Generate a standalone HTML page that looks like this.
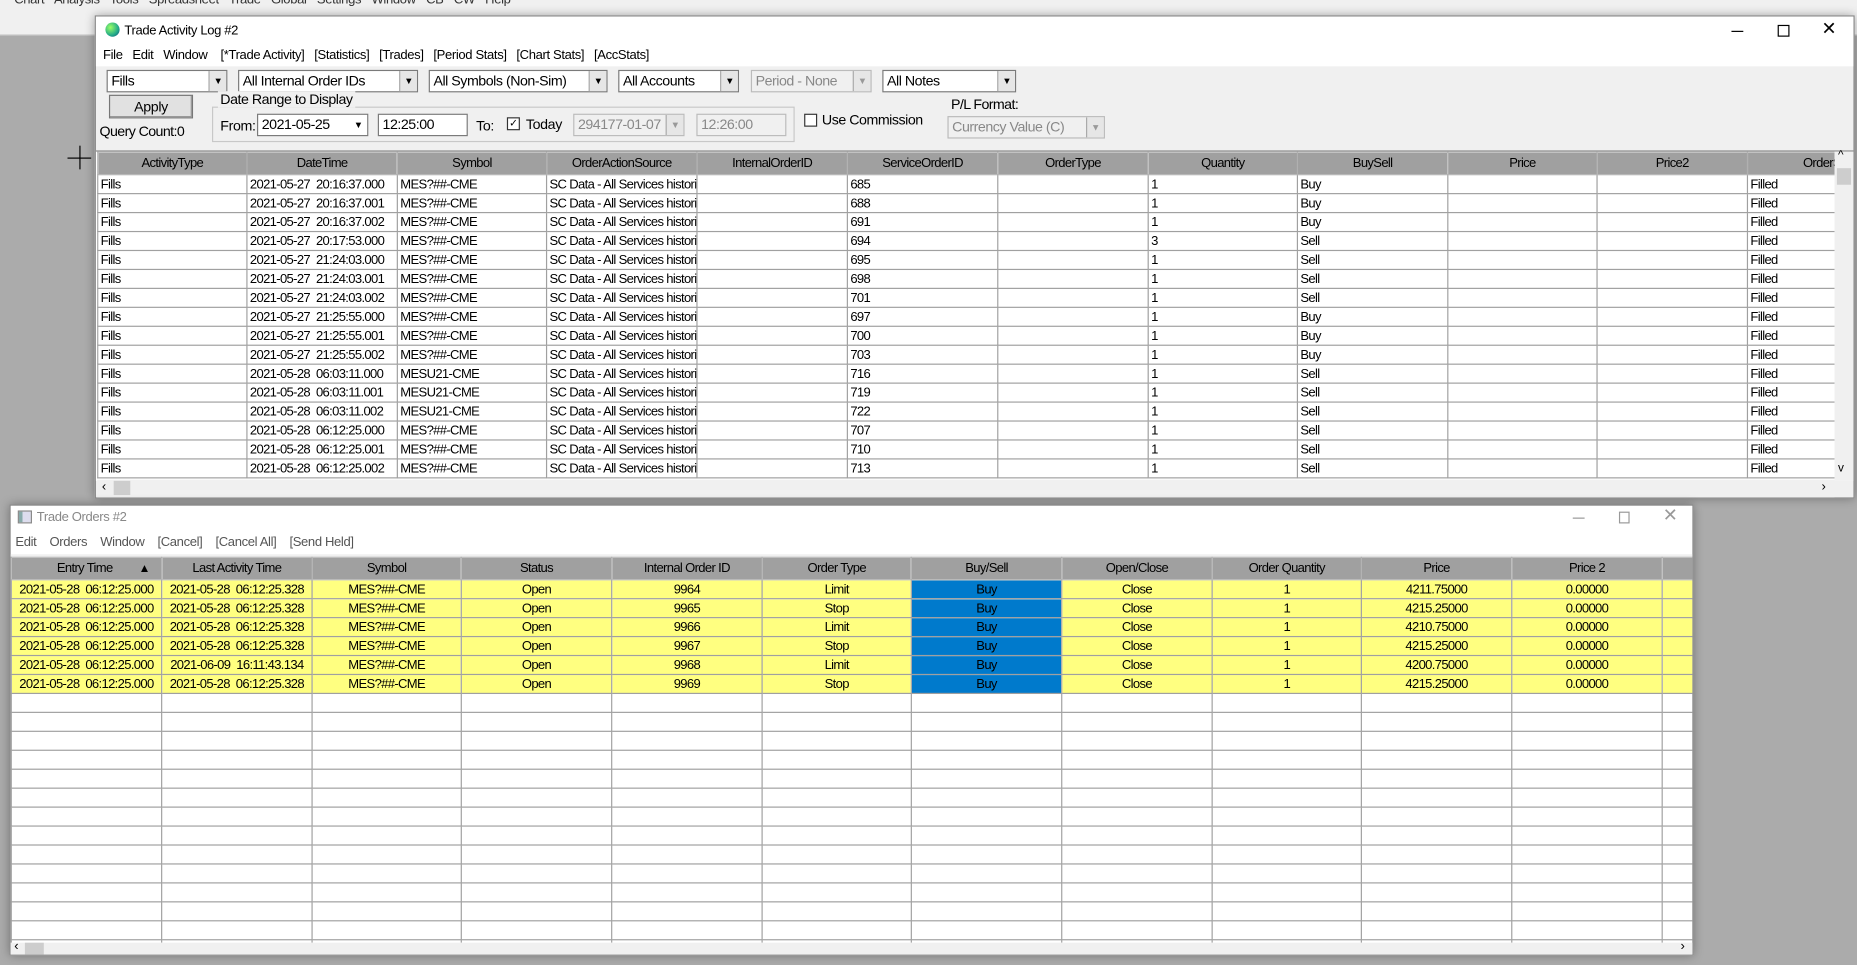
<!DOCTYPE html>
<html><head><meta charset="utf-8"><style>
*{box-sizing:border-box;margin:0;padding:0}
html,body{width:1857px;height:965px;overflow:hidden;background:#ababab}
#s{position:absolute;left:0;top:0;width:1568px;height:815px;transform:scale(1.18431);transform-origin:0 0;font-family:"Liberation Sans",sans-serif;font-size:11px;color:#000;letter-spacing:-0.3px}
.a{position:absolute;white-space:nowrap}
.win{position:absolute;background:#f0f0f0;border:1px solid #888;box-shadow:0 0 8px rgba(0,0,0,.35)}
.combo{position:absolute;height:19px;background:#fff;border:1px solid #7a7a7a;font-size:12px;padding:1px 3px;white-space:nowrap;overflow:hidden;letter-spacing:-0.4px}
.combo .btn{position:absolute;right:0;top:0;width:15px;height:17px;background:#e6e6e6;border-left:1px solid #aaa;font-size:8px;text-align:center;line-height:17px}
.dis{background:#f0f0f0;color:#888;border-color:#bbb}
table{border-collapse:collapse;table-layout:fixed}
td,th{border:1px solid #a0a0a0;height:16px;padding:0 2px;white-space:nowrap;overflow:hidden;font-weight:normal;font-size:11px;line-height:14px;letter-spacing:-0.55px}
th{background:#a0a0a0;border-color:#b0b0b0;text-align:center;height:19px}
#t2 td{text-align:center}
#t2 tr.y td{background:#ffff80}
#t2 tr.y td.b{background:#007acc}
</style></head><body><div id="s">
<div class="a" style="left:0;top:0;width:1568px;height:30px;background:#f0f0f0;border-bottom:1px solid #ccc"></div>
<div class="a" style="left:12px;top:-6px;font-size:11px;color:#333;word-spacing:6px">Chart Analysis Tools Spreadsheet Trade Global&nbsp;Settings Window CB CW Help</div>

<!-- Window 1 -->
<div class="win" style="left:80px;top:13px;width:1486px;height:408px">
 <div class="a" style="left:0;top:0;width:1484px;height:42px;background:#fff"></div>
 <div class="a" style="left:8px;top:5px;width:12px;height:12px;border-radius:50%;background:radial-gradient(circle at 35% 35%,#9f6,#2a8 60%,#147)"></div>
 <div class="a" style="left:24px;top:6px">Trade Activity Log #2</div>
 <div class="a" style="left:1381px;top:12px;width:10px;height:1px;background:#000"></div>
 <div class="a" style="left:1420px;top:7px;width:10px;height:10px;border:1px solid #000"></div>
 <div class="a" style="left:1457px;top:1px;font-size:15px">✕</div>
 <div class="a" style="left:6px;top:27px;word-spacing:0">File&nbsp;&nbsp;&nbsp;Edit&nbsp;&nbsp;&nbsp;Window&nbsp;&nbsp;&nbsp;&nbsp;[*Trade Activity]&nbsp;&nbsp;&nbsp;[Statistics]&nbsp;&nbsp;&nbsp;[Trades]&nbsp;&nbsp;&nbsp;[Period Stats]&nbsp;&nbsp;&nbsp;[Chart Stats]&nbsp;&nbsp;&nbsp;[AccStats]</div>
 <div class="combo" style="left:9px;top:45px;width:102px">Fills<div class="btn">▼</div></div>
 <div class="combo" style="left:120px;top:45px;width:152px">All Internal Order IDs<div class="btn">▼</div></div>
 <div class="combo" style="left:281px;top:45px;width:151px">All Symbols (Non-Sim)<div class="btn">▼</div></div>
 <div class="combo" style="left:441px;top:45px;width:102px">All Accounts<div class="btn">▼</div></div>
 <div class="combo dis" style="left:553px;top:45px;width:102px">Period - None<div class="btn" style="color:#999">▼</div></div>
 <div class="combo" style="left:664px;top:45px;width:113px">All Notes<div class="btn">▼</div></div>
 <div class="a" style="left:11px;top:66px;width:71px;height:20px;background:#e1e1e1;border:1px solid #777;box-shadow:inset -1px -1px #999;text-align:center;font-size:12px;line-height:18px">Apply</div>
 <div class="a" style="left:3px;top:90px;font-size:12px;letter-spacing:-0.5px">Query Count:0</div>
 <div class="a" style="left:98px;top:76px;width:492px;height:30px;border:1px solid #c8c8c8"></div>
 <div class="a" style="left:103px;top:63px;background:#f0f0f0;padding:0 2px;font-size:12px;letter-spacing:-0.4px">Date Range to Display</div>
 <div class="a" style="left:105px;top:85px;font-size:12px">From:</div>
 <div class="combo" style="left:136px;top:82px;width:94px">2021-05-25<div class="btn" style="background:#fff;border:none">▼</div></div>
 <div class="combo" style="left:238px;top:82px;width:76px">12:25:00</div>
 <div class="a" style="left:321px;top:85px;font-size:12px">To:</div>
 <div class="a" style="left:347px;top:85px;width:11px;height:11px;border:1px solid #333;background:#fff;font-size:9px;line-height:9px;text-align:center">✓</div>
 <div class="a" style="left:363px;top:84px;font-size:12px">Today</div>
 <div class="combo dis" style="left:403px;top:82px;width:94px">294177-01-07<div class="btn" style="color:#999">▼</div></div>
 <div class="combo dis" style="left:507px;top:82px;width:76px">12:26:00</div>
 <div class="a" style="left:598px;top:82px;width:11px;height:11px;border:1px solid #333;background:#fff"></div>
 <div class="a" style="left:613px;top:80px;font-size:12px;letter-spacing:-0.4px">Use Commission</div>
 <div class="a" style="left:722px;top:67px;font-size:12px;letter-spacing:-0.5px">P/L Format:</div>
 <div class="combo dis" style="left:719px;top:84px;width:133px">Currency Value (C)<div class="btn" style="color:#999">▼</div></div>
 <div class="a" style="left:0;top:113px;width:1484px;height:279px;background:#fff;border-top:1px solid #888"></div>
 <div class="a" style="left:1px;top:114px;width:1467px;height:278px;overflow:hidden">
 <table style="width:1540px">
 <colgroup><col style="width:126px"><col style="width:127px"><col style="width:126px"><col style="width:127px"><col style="width:127px"><col style="width:127px"><col style="width:127px"><col style="width:126px"><col style="width:127px"><col style="width:126px"><col style="width:127px"><col style="width:147px"></colgroup>
 <tr><th>ActivityType</th><th>DateTime</th><th>Symbol</th><th>OrderActionSource</th><th>InternalOrderID</th><th>ServiceOrderID</th><th>OrderType</th><th>Quantity</th><th>BuySell</th><th>Price</th><th>Price2</th><th>OrderStatus</th></tr>
 <tr><td>Fills</td><td>2021-05-27&nbsp; 20:16:37.000</td><td>MES?##-CME</td><td>SC Data - All Services histori</td><td></td><td>685</td><td></td><td>1</td><td>Buy</td><td></td><td></td><td>Filled</td></tr>
 <tr><td>Fills</td><td>2021-05-27&nbsp; 20:16:37.001</td><td>MES?##-CME</td><td>SC Data - All Services histori</td><td></td><td>688</td><td></td><td>1</td><td>Buy</td><td></td><td></td><td>Filled</td></tr>
 <tr><td>Fills</td><td>2021-05-27&nbsp; 20:16:37.002</td><td>MES?##-CME</td><td>SC Data - All Services histori</td><td></td><td>691</td><td></td><td>1</td><td>Buy</td><td></td><td></td><td>Filled</td></tr>
 <tr><td>Fills</td><td>2021-05-27&nbsp; 20:17:53.000</td><td>MES?##-CME</td><td>SC Data - All Services histori</td><td></td><td>694</td><td></td><td>3</td><td>Sell</td><td></td><td></td><td>Filled</td></tr>
 <tr><td>Fills</td><td>2021-05-27&nbsp; 21:24:03.000</td><td>MES?##-CME</td><td>SC Data - All Services histori</td><td></td><td>695</td><td></td><td>1</td><td>Sell</td><td></td><td></td><td>Filled</td></tr>
 <tr><td>Fills</td><td>2021-05-27&nbsp; 21:24:03.001</td><td>MES?##-CME</td><td>SC Data - All Services histori</td><td></td><td>698</td><td></td><td>1</td><td>Sell</td><td></td><td></td><td>Filled</td></tr>
 <tr><td>Fills</td><td>2021-05-27&nbsp; 21:24:03.002</td><td>MES?##-CME</td><td>SC Data - All Services histori</td><td></td><td>701</td><td></td><td>1</td><td>Sell</td><td></td><td></td><td>Filled</td></tr>
 <tr><td>Fills</td><td>2021-05-27&nbsp; 21:25:55.000</td><td>MES?##-CME</td><td>SC Data - All Services histori</td><td></td><td>697</td><td></td><td>1</td><td>Buy</td><td></td><td></td><td>Filled</td></tr>
 <tr><td>Fills</td><td>2021-05-27&nbsp; 21:25:55.001</td><td>MES?##-CME</td><td>SC Data - All Services histori</td><td></td><td>700</td><td></td><td>1</td><td>Buy</td><td></td><td></td><td>Filled</td></tr>
 <tr><td>Fills</td><td>2021-05-27&nbsp; 21:25:55.002</td><td>MES?##-CME</td><td>SC Data - All Services histori</td><td></td><td>703</td><td></td><td>1</td><td>Buy</td><td></td><td></td><td>Filled</td></tr>
 <tr><td>Fills</td><td>2021-05-28&nbsp; 06:03:11.000</td><td>MESU21-CME</td><td>SC Data - All Services histori</td><td></td><td>716</td><td></td><td>1</td><td>Sell</td><td></td><td></td><td>Filled</td></tr>
 <tr><td>Fills</td><td>2021-05-28&nbsp; 06:03:11.001</td><td>MESU21-CME</td><td>SC Data - All Services histori</td><td></td><td>719</td><td></td><td>1</td><td>Sell</td><td></td><td></td><td>Filled</td></tr>
 <tr><td>Fills</td><td>2021-05-28&nbsp; 06:03:11.002</td><td>MESU21-CME</td><td>SC Data - All Services histori</td><td></td><td>722</td><td></td><td>1</td><td>Sell</td><td></td><td></td><td>Filled</td></tr>
 <tr><td>Fills</td><td>2021-05-28&nbsp; 06:12:25.000</td><td>MES?##-CME</td><td>SC Data - All Services histori</td><td></td><td>707</td><td></td><td>1</td><td>Sell</td><td></td><td></td><td>Filled</td></tr>
 <tr><td>Fills</td><td>2021-05-28&nbsp; 06:12:25.001</td><td>MES?##-CME</td><td>SC Data - All Services histori</td><td></td><td>710</td><td></td><td>1</td><td>Sell</td><td></td><td></td><td>Filled</td></tr>
 <tr><td>Fills</td><td>2021-05-28&nbsp; 06:12:25.002</td><td>MES?##-CME</td><td>SC Data - All Services histori</td><td></td><td>713</td><td></td><td>1</td><td>Sell</td><td></td><td></td><td>Filled</td></tr>
 </table></div>
 <div class="a" style="left:1468px;top:114px;width:16px;height:278px;background:#f0f0f0"><div class="a" style="left:3px;top:-2px;font-size:10px">^</div><div class="a" style="left:2px;top:14px;width:12px;height:14px;background:#cdcdcd"></div><div class="a" style="left:3px;top:262px;font-size:10px">v</div></div>
 <div class="a" style="left:1px;top:391px;width:1467px;height:15px;background:#f0f0f0"><div class="a" style="left:4px;top:0;font-size:11px">‹</div><div class="a" style="left:14px;top:1px;width:14px;height:12px;background:#cdcdcd"></div><div class="a" style="left:1456px;top:0;font-size:11px">›</div></div>
</div>

<!-- Window 2 -->
<div class="win" style="left:8px;top:426px;width:1422px;height:381px;background:#fff">
 <div class="a" style="left:6px;top:4px;width:12px;height:11px;border:1px solid #888;background:linear-gradient(90deg,#8aa 30%,#dde 30%)"></div>
 <div class="a" style="left:22px;top:4px;color:#888">Trade Orders #2</div>
 <div class="a" style="left:1319px;top:10px;width:10px;height:1px;background:#999"></div>
 <div class="a" style="left:1358px;top:5px;width:9px;height:10px;border:1px solid #999"></div>
 <div class="a" style="left:1395px;top:-1px;font-size:15px;color:#999">✕</div>
 <div class="a" style="left:4px;top:25px;color:#555">Edit&nbsp;&nbsp;&nbsp;&nbsp;Orders&nbsp;&nbsp;&nbsp;&nbsp;Window&nbsp;&nbsp;&nbsp;&nbsp;[Cancel]&nbsp;&nbsp;&nbsp;&nbsp;[Cancel All]&nbsp;&nbsp;&nbsp;&nbsp;[Send Held]</div>
 <div class="a" style="left:0;top:41px;width:1420px;height:2px;background:#f0f0f0"></div>
 <div class="a" style="left:-1px;top:43px;width:1421px;height:326px;overflow:hidden;border-left:1px solid #888">
 <table id="t2" style="width:1420px">
 <colgroup><col style="width:127px"><col style="width:127px"><col style="width:126px"><col style="width:127px"><col style="width:127px"><col style="width:126px"><col style="width:127px"><col style="width:127px"><col style="width:126px"><col style="width:127px"><col style="width:127px"><col style="width:26px"></colgroup>
 <tr><th style="text-align:left;padding-left:38px">Entry Time<span style="margin-left:22px;font-size:10px">▲</span></th><th>Last Activity Time</th><th>Symbol</th><th>Status</th><th>Internal Order ID</th><th>Order Type</th><th>Buy/Sell</th><th>Open/Close</th><th>Order Quantity</th><th>Price</th><th>Price 2</th><th></th></tr>
 <tr class="y"><td>2021-05-28&nbsp; 06:12:25.000</td><td>2021-05-28&nbsp; 06:12:25.328</td><td>MES?##-CME</td><td>Open</td><td>9964</td><td>Limit</td><td class="b">Buy</td><td>Close</td><td>1</td><td>4211.75000</td><td>0.00000</td><td></td></tr>
 <tr class="y"><td>2021-05-28&nbsp; 06:12:25.000</td><td>2021-05-28&nbsp; 06:12:25.328</td><td>MES?##-CME</td><td>Open</td><td>9965</td><td>Stop</td><td class="b">Buy</td><td>Close</td><td>1</td><td>4215.25000</td><td>0.00000</td><td></td></tr>
 <tr class="y"><td>2021-05-28&nbsp; 06:12:25.000</td><td>2021-05-28&nbsp; 06:12:25.328</td><td>MES?##-CME</td><td>Open</td><td>9966</td><td>Limit</td><td class="b">Buy</td><td>Close</td><td>1</td><td>4210.75000</td><td>0.00000</td><td></td></tr>
 <tr class="y"><td>2021-05-28&nbsp; 06:12:25.000</td><td>2021-05-28&nbsp; 06:12:25.328</td><td>MES?##-CME</td><td>Open</td><td>9967</td><td>Stop</td><td class="b">Buy</td><td>Close</td><td>1</td><td>4215.25000</td><td>0.00000</td><td></td></tr>
 <tr class="y"><td>2021-05-28&nbsp; 06:12:25.000</td><td>2021-06-09&nbsp; 16:11:43.134</td><td>MES?##-CME</td><td>Open</td><td>9968</td><td>Limit</td><td class="b">Buy</td><td>Close</td><td>1</td><td>4200.75000</td><td>0.00000</td><td></td></tr>
 <tr class="y"><td>2021-05-28&nbsp; 06:12:25.000</td><td>2021-05-28&nbsp; 06:12:25.328</td><td>MES?##-CME</td><td>Open</td><td>9969</td><td>Stop</td><td class="b">Buy</td><td>Close</td><td>1</td><td>4215.25000</td><td>0.00000</td><td></td></tr>
 <tr><td></td><td></td><td></td><td></td><td></td><td></td><td></td><td></td><td></td><td></td><td></td><td></td></tr>
 <tr><td></td><td></td><td></td><td></td><td></td><td></td><td></td><td></td><td></td><td></td><td></td><td></td></tr>
 <tr><td></td><td></td><td></td><td></td><td></td><td></td><td></td><td></td><td></td><td></td><td></td><td></td></tr>
 <tr><td></td><td></td><td></td><td></td><td></td><td></td><td></td><td></td><td></td><td></td><td></td><td></td></tr>
 <tr><td></td><td></td><td></td><td></td><td></td><td></td><td></td><td></td><td></td><td></td><td></td><td></td></tr>
 <tr><td></td><td></td><td></td><td></td><td></td><td></td><td></td><td></td><td></td><td></td><td></td><td></td></tr>
 <tr><td></td><td></td><td></td><td></td><td></td><td></td><td></td><td></td><td></td><td></td><td></td><td></td></tr>
 <tr><td></td><td></td><td></td><td></td><td></td><td></td><td></td><td></td><td></td><td></td><td></td><td></td></tr>
 <tr><td></td><td></td><td></td><td></td><td></td><td></td><td></td><td></td><td></td><td></td><td></td><td></td></tr>
 <tr><td></td><td></td><td></td><td></td><td></td><td></td><td></td><td></td><td></td><td></td><td></td><td></td></tr>
 <tr><td></td><td></td><td></td><td></td><td></td><td></td><td></td><td></td><td></td><td></td><td></td><td></td></tr>
 <tr><td></td><td></td><td></td><td></td><td></td><td></td><td></td><td></td><td></td><td></td><td></td><td></td></tr>
 <tr><td></td><td></td><td></td><td></td><td></td><td></td><td></td><td></td><td></td><td></td><td></td><td></td></tr>
 <tr><td></td><td></td><td></td><td></td><td></td><td></td><td></td><td></td><td></td><td></td><td></td><td></td></tr>
 </table></div>
 <div class="a" style="left:0;top:369px;width:1420px;height:10px;background:#f0f0f0"><div class="a" style="left:3px;top:-3px;font-size:11px">‹</div><div class="a" style="left:12px;top:0;width:16px;height:10px;background:#cdcdcd"></div><div class="a" style="left:1410px;top:-3px;font-size:11px">›</div></div>
</div>
<div class="a" style="left:57px;top:133px;width:20px;height:1px;background:#000"></div>
<div class="a" style="left:67px;top:123px;width:1px;height:20px;background:#000"></div>
</div></body></html>
